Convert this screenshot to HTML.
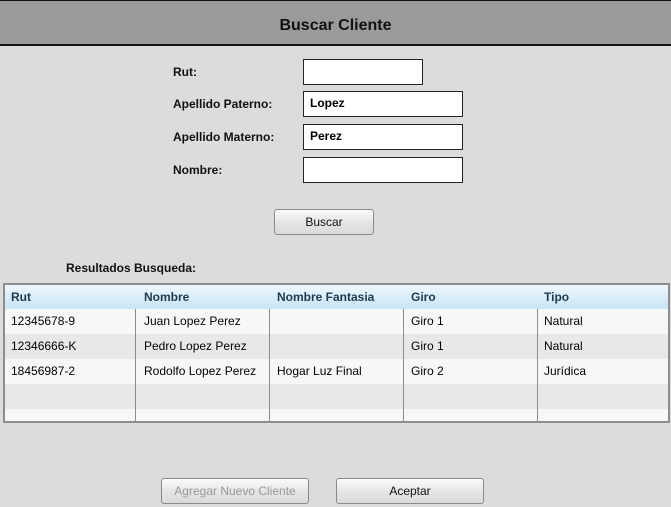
<!DOCTYPE html>
<html><head><style>
body{margin:0;width:671px;height:507px;background:#dcdcdc;font-family:"Liberation Sans",sans-serif;font-size:12px;position:relative;overflow:hidden}
.a{position:absolute}
.hdr{left:0;top:0;width:671px;height:46px;background:#9a9a9a;border-top:1px solid #111;border-bottom:2px solid #111;box-sizing:border-box;text-align:center;line-height:50px;font-size:16px;font-weight:bold;color:#111}
.lbl{font-weight:bold;color:#111}
.in{background:#fff;border:1px solid #222;box-sizing:border-box;height:26px;padding-left:6px;line-height:23px;font-weight:bold}
.btn{border:1px solid #8a8a8a;border-radius:3px;box-sizing:border-box;height:26px;text-align:center;line-height:24px;background:linear-gradient(#fbfbfb,#e6e6e6 50%,#dadada);color:#111}
.tbl{left:3px;top:283px;width:667px;height:140px;border:2px solid #8d8d8d;box-sizing:border-box;background:#f2f2f2;overflow:hidden}
.th{position:absolute;left:0;top:0;width:100%;height:24px;background:linear-gradient(#eef7fd,#c7e4f6);border-bottom:1px solid #7a93a8}
.th span,.r span{position:absolute;top:0;line-height:24px}
.th span{font-weight:bold;color:#1e3a50}
.r{position:absolute;left:0;width:100%;height:25px}
.vl{position:absolute;top:24px;width:1px;height:120px;background:#8d8d8d}
</style></head><body>
<div class="a hdr">Buscar Cliente</div>
<div class="a lbl" style="left:173px;top:65px">Rut:</div>
<div class="a lbl" style="left:173px;top:97px">Apellido Paterno:</div>
<div class="a lbl" style="left:173px;top:130px">Apellido Materno:</div>
<div class="a lbl" style="left:173px;top:163px">Nombre:</div>
<div class="a in" style="left:303px;top:59px;width:120px"></div>
<div class="a in" style="left:303px;top:91px;width:160px">Lopez</div>
<div class="a in" style="left:303px;top:124px;width:160px">Perez</div>
<div class="a in" style="left:303px;top:157px;width:160px"></div>
<div class="a btn" style="left:274px;top:209px;width:100px">Buscar</div>
<div class="a lbl" style="left:66px;top:261px">Resultados Busqueda:</div>
<div class="a tbl">
<div class="th"><span style="left:6px">Rut</span><span style="left:139px">Nombre</span><span style="left:272px">Nombre Fantasia</span><span style="left:406px">Giro</span><span style="left:539px">Tipo</span></div>
<div class="r" style="top:24px;background:#f7f7f7"><span style="left:6px">12345678-9</span><span style="left:139px">Juan Lopez Perez</span><span style="left:406px">Giro 1</span><span style="left:539px">Natural</span></div>
<div class="r" style="top:49px;background:#e8e8e8"><span style="left:6px">12346666-K</span><span style="left:139px">Pedro Lopez Perez</span><span style="left:406px">Giro 1</span><span style="left:539px">Natural</span></div>
<div class="r" style="top:74px;background:#f7f7f7"><span style="left:6px">18456987-2</span><span style="left:139px">Rodolfo Lopez Perez</span><span style="left:272px">Hogar Luz Final</span><span style="left:406px">Giro 2</span><span style="left:539px">Jurídica</span></div>
<div class="r" style="top:99px;background:#e8e8e8"></div>
<div class="r" style="top:124px;background:#f7f7f7"></div>
<div class="vl" style="left:130px"></div><div class="vl" style="left:264px"></div><div class="vl" style="left:398px"></div><div class="vl" style="left:532px"></div>
</div>
<div class="a btn" style="left:161px;top:478px;width:148px;color:#999">Agregar Nuevo Cliente</div>
<div class="a btn" style="left:336px;top:478px;width:148px">Aceptar</div>
</body></html>
